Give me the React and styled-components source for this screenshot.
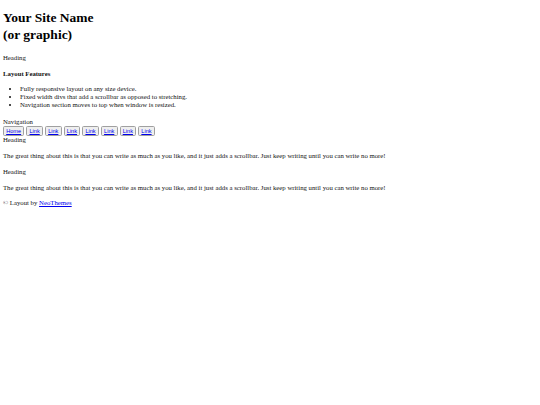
import React from "react";
import styled, { createGlobalStyle } from "styled-components";

const Global = createGlobalStyle`
  html, body { margin: 0; padding: 0; background: #fff; }
  body {
    font-family: "Liberation Serif", "Times New Roman", serif;
    color: #000;
  }
`;

const Page = styled.div`
  padding: 9px 3px;
  font-size: 6.75px;
  line-height: 8px;
  color: #111;
`;

const SiteName = styled.h1`
  margin: 0 0 11px;
  font-size: 13.5px;
  line-height: 17px;
  font-weight: bold;
  color: #000;
`;

const Label = styled.div`
  margin: ${(p) => p.$mt || 0}px 0 0;
`;

const SubTitle = styled.div`
  margin-top: 8px;
  font-weight: bold;
`;

const List = styled.ul`
  margin: 7px 0 0;
  padding-left: 17px;
  list-style: disc;
`;

const NavRow = styled.div`
  display: flex;
  flex-wrap: wrap;
  gap: 2px;
  line-height: normal;
`;

const NavButton = styled.span`
  display: inline-flex;
  align-items: center;
  height: 10px;
  box-sizing: border-box;
  padding: 0 2.2px;
  border: 1px solid #a0a0a0;
  border-radius: 1.6px;
  background: #efefef;
  font-family: "Liberation Sans", Arial, sans-serif;
  font-size: 5.6px;
`;

const Anchor = styled.a`
  color: #0000ee;
  text-decoration: underline;
`;

const Para = styled.p`
  margin: 8px 0 0;
`;

const Footer = styled.div`
  margin-top: 7px;
`;

const navItems = ["Home", "Link", "Link", "Link", "Link", "Link", "Link", "Link"];

export default function App() {
  return (
    <>
      <Global />
      <Page>
        <SiteName>
          Your Site Name
          <br />
          (or graphic)
        </SiteName>
        <Label>Heading</Label>
        <SubTitle>Layout Features</SubTitle>
        <List>
          <li>Fully responsive layout on any size device.</li>
          <li>Fixed width divs that add a scrollbar as opposed to stretching.</li>
          <li>Navigation section moves to top when window is resized.</li>
        </List>
        <Label $mt={9}>Navigation</Label>
        <NavRow>
          {navItems.map((t, i) => (
            <NavButton key={i}>
              <Anchor href="#">{t}</Anchor>
            </NavButton>
          ))}
        </NavRow>
        <Label>Heading</Label>
        <Para>
          The great thing about this is that you can write as much as you like, and it just adds a scrollbar. Just keep writing until you can write no more!
        </Para>
        <Label $mt={8}>Heading</Label>
        <Para>
          The great thing about this is that you can write as much as you like, and it just adds a scrollbar. Just keep writing until you can write no more!
        </Para>
        <Footer>
          © Layout by <Anchor href="#">NeoThemes</Anchor>
        </Footer>
      </Page>
    </>
  );
}
